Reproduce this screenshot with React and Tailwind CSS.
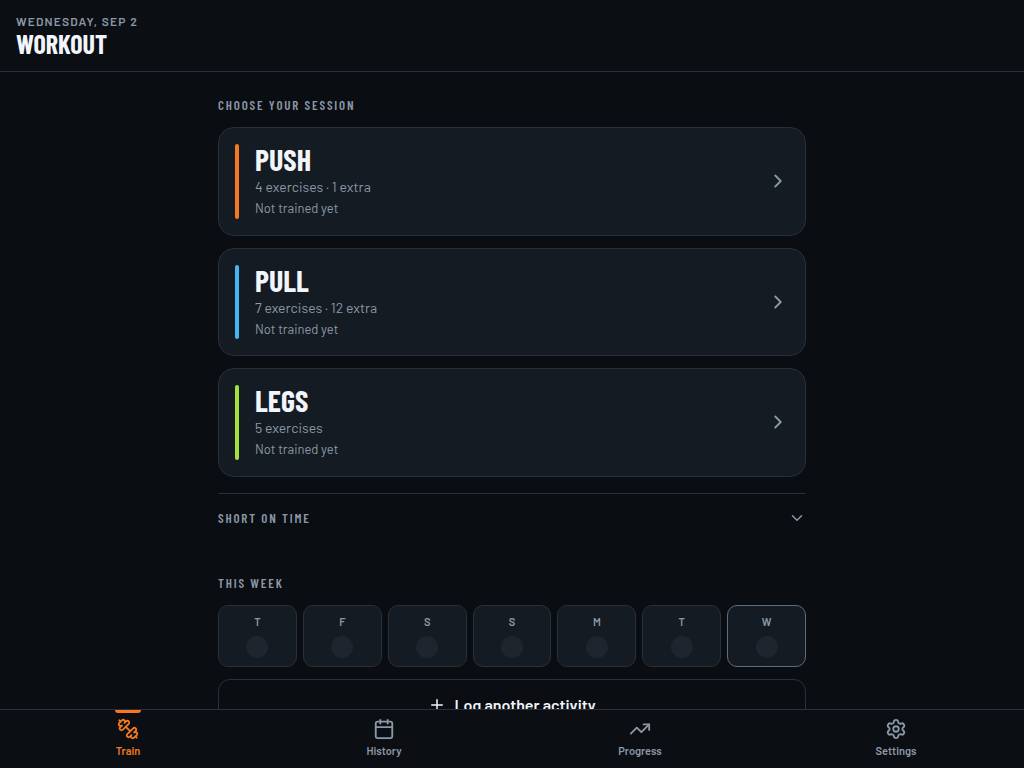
import { Calendar, ChevronDown, ChevronRight, Plus, Settings, TrendingUp } from 'lucide-react';

const sessions = [
  { name: 'Push', detail: '4 exercises · 1 extra', accent: 'bg-[#f47920]' },
  { name: 'Pull', detail: '7 exercises · 12 extra', accent: 'bg-[#46b6f2]' },
  { name: 'Legs', detail: '5 exercises', accent: 'bg-[#a3e23c]' },
];

const days = ['T', 'F', 'S', 'S', 'M', 'T', 'W'];

const condensed =
  "font-['Barlow_Condensed','Roboto_Condensed','Liberation_Sans_Narrow',sans-serif]";

function TrainIcon() {
  return (
    <svg
      viewBox="0 0 24 24"
      className="size-[22px]"
      fill="none"
      stroke="currentColor"
      strokeWidth="2"
      strokeLinecap="round"
      strokeLinejoin="round"
      aria-hidden="true"
    >
      <path d="M14.4 14.4 9.6 9.6" />
      <path d="M18.657 21.485a2 2 0 1 1-2.829-2.828l-1.767 1.768a2 2 0 1 1-2.829-2.829l6.364-6.364a2 2 0 1 1 2.829 2.829l-1.768 1.767a2 2 0 1 1 2.828 2.829z" />
      <path d="m21.5 21.5-1.4-1.4" />
      <path d="M3.9 3.9 2.5 2.5" />
      <path d="M6.404 12.768a2 2 0 1 1-2.829-2.829l1.768-1.767a2 2 0 1 1-2.828-2.829l2.828-2.828a2 2 0 1 1 2.829 2.828l1.767-1.768a2 2 0 1 1 2.829 2.829z" />
    </svg>
  );
}

function SectionTitle({ children }) {
  return (
    <h2 className={`${condensed} text-[13px] font-semibold uppercase leading-5 tracking-[0.14em] text-[#8b98a5]`}>
      {children}
    </h2>
  );
}

function SessionCard({ name, detail, accent }) {
  return (
    <button
      type="button"
      className="flex w-full items-center gap-4 rounded-2xl border border-[#2a3039] bg-[#151b23] p-4 text-left"
    >
      <span className={`w-1 self-stretch rounded-full ${accent}`} />
      <span className="flex-1">
        <span className={`${condensed} block text-[30px] font-bold uppercase leading-none text-[#f2f5fa]`}>
          {name}
        </span>
        <span className="mt-0.5 block text-[14px] leading-normal text-[#8b98a5]">{detail}</span>
        <span className="mt-0.5 block text-[13px] leading-normal text-[#8b98a5]">Not trained yet</span>
      </span>
      <ChevronRight className="size-[22px] text-[#8b98a5]" />
    </button>
  );
}

function NavItem({ label, active, children }) {
  return (
    <a
      href={`#${label.toLowerCase()}`}
      aria-current={active ? 'page' : undefined}
      className={`relative flex flex-1 flex-col items-center gap-0.5 pt-2 pb-2 text-[11px] font-semibold leading-[18px] ${
        active ? 'text-[#f47920]' : 'text-[#8b98a5]'
      }`}
    >
      {active && <span className="absolute top-0 h-[3px] w-[26px] rounded-b-sm bg-[#f47920]" />}
      {children}
      {label}
    </a>
  );
}

export default function App() {
  return (
    <div className="min-h-screen bg-[#0a0d12] font-['Barlow','Roboto',sans-serif]">
      <header className="border-b border-[#2a3039] bg-[#0b0f14] px-4 pt-3 pb-3.5">
        <p className="text-[12px] font-semibold uppercase leading-[18px] tracking-[0.1em] text-[#8b98a5]">
          Wednesday, Sep 2
        </p>
        <h1 className={`${condensed} text-[26px] font-bold uppercase leading-[27px] text-[#f2f5fa]`}>Workout</h1>
      </header>

      <main className="mx-auto flex max-w-[620px] flex-col px-4 pt-[23px] pb-20">
        <SectionTitle>Choose your session</SectionTitle>
        <div className="mt-3 flex flex-col gap-3">
          {sessions.map((session) => (
            <SessionCard key={session.name} {...session} />
          ))}
        </div>

        <button
          type="button"
          className="mt-4 flex items-center justify-between border-t border-[#2a3039] py-3.5 text-[#8b98a5]"
        >
          <SectionTitle>Short on time</SectionTitle>
          <ChevronDown className="size-[18px]" />
        </button>

        <section className="mt-[31px] flex flex-col gap-3">
          <SectionTitle>This week</SectionTitle>
          <ul className="grid grid-cols-7 gap-1.5">
            {days.map((day, i) => (
              <li
                key={i}
                className={`flex flex-col items-center gap-1.5 rounded-[10px] border bg-[#151b23] py-2 text-[11px] font-semibold leading-4 text-[#8b98a5] ${
                  i === days.length - 1 ? 'border-[#5f6d7f]' : 'border-[#2a3039]'
                }`}
              >
                {day}
                <span className="size-[22px] rounded-full bg-[#1e252e]" />
              </li>
            ))}
          </ul>
          <button
            type="button"
            className="flex h-[52px] items-center justify-center gap-2 rounded-xl border border-[#2a3039] text-[16px] font-semibold text-[#f2f5fa]"
          >
            <Plus className="size-[18px]" />
            Log another activity
          </button>
        </section>
      </main>

      <nav className="fixed inset-x-0 bottom-0 flex border-t border-[#2a3039] bg-[#0b0f14]">
        <NavItem label="Train" active>
          <TrainIcon />
        </NavItem>
        <NavItem label="History">
          <Calendar className="size-[22px]" />
        </NavItem>
        <NavItem label="Progress">
          <TrendingUp className="size-[22px]" />
        </NavItem>
        <NavItem label="Settings">
          <Settings className="size-[22px]" />
        </NavItem>
      </nav>
    </div>
  );
}
